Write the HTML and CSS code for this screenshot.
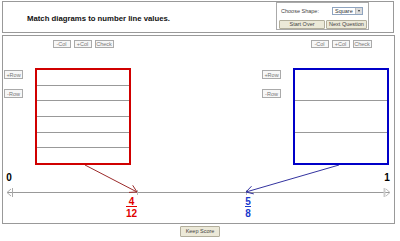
FILE: index.html
```html
<!DOCTYPE html>
<html>
  <head>
    <meta charset="utf-8" />
    <title>Fraction Match</title>
    <link rel="stylesheet" href="styles.css">
  </head>

  <body>
    <!-- 見出しと操作パネル -->
    <div class="header">
      <div class="title">Match diagrams to number line values.</div>
      <div class="controls">
        <div class="control-row">
          <span class="label">Choose Shape:</span>
          <span class="select">Square<span class="select-arrow"></span></span>
        </div>
        <div class="control-row">
          <button class="btn btn-start">Start Over</button>
          <button class="btn btn-next">Next Question</button>
        </div>
      </div>
    </div>

    <!-- 図と数直線 -->
    <div class="board">
      <div class="diagrams">
        <div class="diagram">
          <div class="col-tools">
            <button class="tool">-Col</button>
            <button class="tool">+Col</button>
            <button class="tool">Check</button>
          </div>
          <div class="row-tools">
            <button class="tool">+Row</button>
            <button class="tool">-Row</button>
          </div>
          <div class="shape shape-red">
            <div class="part"></div>
            <div class="part"></div>
            <div class="part"></div>
            <div class="part"></div>
            <div class="part"></div>
            <div class="part"></div>
          </div>
        </div>

        <div class="diagram">
          <div class="col-tools">
            <button class="tool">-Col</button>
            <button class="tool">+Col</button>
            <button class="tool">Check</button>
          </div>
          <div class="row-tools">
            <button class="tool">+Row</button>
            <button class="tool">-Row</button>
          </div>
          <div class="shape shape-blue">
            <div class="part"></div>
            <div class="part"></div>
            <div class="part"></div>
          </div>
        </div>
      </div>

      <svg class="numberline" width="391" height="58" viewBox="0 0 391 58">
        <!-- 数直線 -->
        <line x1="4" y1="27.5" x2="387" y2="27.5" stroke="#999" />
        <polyline points="8,24 4,27.5 8,31" fill="none" stroke="#aaa" />
        <line x1="9.5" y1="23" x2="9.5" y2="32" stroke="#aaa" />
        <line x1="381.5" y1="23" x2="381.5" y2="32" stroke="#ccc" stroke-width="2" />
        <polyline points="383,24 387,27.5 383,31" fill="none" stroke="#bbb" />
        <text class="nl-label" x="6" y="16">0</text>
        <text class="nl-label" x="384" y="16">1</text>

        <!-- 赤の図 -->
        <line x1="134.5" y1="25" x2="134.5" y2="30" stroke="#bbb" />
        <line x1="82" y1="0" x2="134" y2="27" stroke="#9b2a2a" />
        <polyline points="126,27.4 134,27 129.7,20.3" fill="none" stroke="#9b2a2a" />
        <text class="nl-label red" x="128.5" y="40">4</text>
        <line x1="123" y1="41.5" x2="134" y2="41.5" stroke="#e00000" />
        <text class="nl-label red" x="128.5" y="52">12</text>

        <!-- 青の図 -->
        <line x1="243.5" y1="25" x2="243.5" y2="30" stroke="#bbb" />
        <line x1="336" y1="0" x2="243" y2="27" stroke="#33339f" />
        <polyline points="250.8,28.9 243,27 248.5,21.2" fill="none" stroke="#33339f" />
        <text class="nl-label blue" x="245" y="40">5</text>
        <line x1="242" y1="41.5" x2="248" y2="41.5" stroke="#1a3acc" />
        <text class="nl-label blue" x="245" y="52">8</text>
      </svg>
    </div>

    <div class="footer">
      <button class="btn btn-score">Keep Score</button>
    </div>
  </body>
</html>
```

FILE: styles.css
```css
body {
  margin: 0;
  font-family: "Liberation Sans", Arial, sans-serif;
}
* {
  box-sizing: border-box;
}

/* 見出し */
.header {
  margin: 1px 0 0 2px;
  width: 392px;
  height: 32px;
  border: 1px solid #999;
  padding: 0 24px;
  display: flex;
  justify-content: space-between;
  align-items: flex-start;
}

.title {
  margin-top: 12px;
  font-size: 7.75px;
  line-height: 10px;
  font-weight: bold;
  color: #111;
}

/* 操作パネル */
.controls {
  width: 93px;
  height: 28px;
  border: 1px solid #aaa;
  padding: 4px 0 0 2px;
  display: flex;
  flex-direction: column;
  gap: 5px;
}

.control-row {
  display: flex;
  align-items: center;
  gap: 1px;
}

.label {
  flex: 1;
  padding-left: 2px;
  font-size: 5.5px;
  line-height: 8px;
  color: #444;
}

.select {
  position: relative;
  width: 31px;
  height: 8px;
  margin-right: 5px;
  border: 1px solid #8fa4c0;
  background-color: #fff;
  padding-left: 2px;
  font-size: 5.5px;
  line-height: 6px;
  color: #333;
}

.select-arrow {
  position: absolute;
  top: 0;
  right: 0;
  width: 7px;
  height: 6px;
  background-color: #dcdcdc;
  border-left: 1px solid #bbb;
}

.select-arrow::after {
  content: "";
  position: absolute;
  top: 2px;
  left: 2px;
  border-left: 1.5px solid transparent;
  border-right: 1.5px solid transparent;
  border-top: 2px solid #333;
}

.btn {
  height: 9px;
  padding: 0;
  border: 1px solid #b2ae9c;
  border-radius: 1px;
  background-color: #ece9d8;
  font-family: "Liberation Sans", Arial, sans-serif;
  font-size: 5.5px;
  line-height: 7px;
  color: #444;
}

.btn-start {
  width: 46px;
}

.btn-next {
  width: 41px;
}

/* 図 */
.board {
  margin: 2px 0 0 2px;
  width: 393px;
  border: 1px solid #999;
  padding-top: 4px;
}

.diagrams {
  display: flex;
  justify-content: space-between;
  padding: 0 5px 0 1px;
}

.diagram {
  display: grid;
  grid-template-columns: 19px 96px;
  grid-template-rows: 8px 97px;
  column-gap: 12px;
  row-gap: 20px;
}

.col-tools {
  grid-column: 2;
  display: flex;
  justify-content: center;
  gap: 3px;
}

.col-tools .tool {
  width: 18px;
  height: 8px;
}

.col-tools .tool:last-child {
  width: 19px;
}

.row-tools {
  grid-column: 1;
  display: flex;
  flex-direction: column;
  gap: 10px;
  padding-top: 2px;
}

.tool {
  width: 19px;
  height: 9px;
  padding: 0;
  border: 1px solid #aaa;
  background-color: #f7f7f7;
  font-family: "Liberation Sans", Arial, sans-serif;
  font-size: 5.5px;
  line-height: 6px;
  color: #777;
}

.shape {
  display: flex;
  flex-direction: column;
  border: 2px solid;
}

.shape-red {
  border-color: #d00000;
}

.shape-blue {
  border-color: #0000c8;
}

.part {
  flex: 1;
  border-top: 1px solid #999;
}

.part:first-child {
  border-top: none;
}

/* 数直線 */
.numberline {
  display: block;
}

.nl-label {
  font-family: "Liberation Sans", Arial, sans-serif;
  font-size: 10px;
  font-weight: bold;
  text-anchor: middle;
  fill: #000;
}

.nl-label.red {
  fill: #e00000;
}

.nl-label.blue {
  fill: #1a3acc;
}

.footer {
  display: flex;
  justify-content: center;
  padding-top: 2px;
}

.btn-score {
  width: 40px;
  height: 11px;
}
```
